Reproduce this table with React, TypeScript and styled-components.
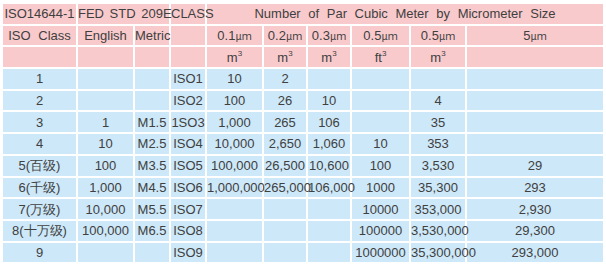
import React from 'react';
import styled, { createGlobalStyle } from 'styled-components';

const GlobalStyle = createGlobalStyle`
  body {
    margin: 0;
    background: #ffffff;
  }
`;

const Table = styled.table`
  margin: 2px 0 0 1px;
  width: 604px;
  table-layout: fixed;
  border-collapse: separate;
  border-spacing: 2px;
  font-family: 'Liberation Sans', Arial, sans-serif;
  font-size: 13px;
  color: #404040;
  word-spacing: 4px;
`;

const Cell = styled.td<{ $head?: boolean; $tight?: boolean }>`
  height: 19.7px;
  padding: 0;
  text-align: center;
  vertical-align: middle;
  white-space: nowrap;
  overflow: visible;
  line-height: 15px;
  background: ${(p) => (p.$head ? '#f9cacc' : '#cde8f9')};
  word-spacing: ${(p) => (p.$tight ? '2px' : 'inherit')};
`;

const Micro = styled.span`
  font-family: 'Noto Sans CJK SC', sans-serif;
  font-size: 10px;
  word-spacing: 0;
`;

const Sup = styled.sup`
  font-size: 8px;
  vertical-align: 6px;
  line-height: 0;
`;

const widths = [73, 55, 34, 34, 55, 42, 42, 57, 54, 136];

const rows: string[][] = [
  ['1', '', '', 'ISO1', '10', '2', '', '', '', ''],
  ['2', '', '', 'ISO2', '100', '26', '10', '', '4', ''],
  ['3', '1', 'M1.5', '1SO3', '1,000', '265', '106', '', '35', ''],
  ['4', '10', 'M2.5', 'ISO4', '10,000', '2,650', '1,060', '10', '353', ''],
  ['5(百级)', '100', 'M3.5', 'ISO5', '100,000', '26,500', '10,600', '100', '3,530', '29'],
  ['6(千级)', '1,000', 'M4.5', 'ISO6', '1,000,000', '265,000', '106,000', '1000', '35,300', '293'],
  ['7(万级)', '10,000', 'M5.5', 'ISO7', '', '', '', '10000', '353,000', '2,930'],
  ['8(十万级)', '100,000', 'M6.5', 'ISO8', '', '', '', '100000', '3,530,000', '29,300'],
  ['9', '', '', 'ISO9', '', '', '', '1000000', '35,300,000', '293,000'],
];

const Size = ({ v }: { v: string }) => (
  <Cell $head>
    {v}
    <Micro>μｍ</Micro>
  </Cell>
);

const Unit = ({ u }: { u: string }) => (
  <Cell $head>
    {u}
    <Sup>3</Sup>
  </Cell>
);

export default function App() {
  return (
    <>
      <GlobalStyle />
      <Table>
        <colgroup>
          {widths.map((w, i) => (
            <col key={i} style={{ width: w }} />
          ))}
        </colgroup>
        <thead>
          <tr>
            <Cell $head>ISO14644-1</Cell>
            <Cell $head $tight colSpan={2}>
              FED STD 209E
            </Cell>
            <Cell $head>CLASS</Cell>
            <Cell $head colSpan={6}>Number of Par Cubic Meter by Micrometer Size</Cell>
          </tr>
          <tr>
            <Cell $head>ISO Class</Cell>
            <Cell $head>English</Cell>
            <Cell $head>Metric</Cell>
            <Cell $head />
            <Size v="0.1" />
            <Size v="0.2" />
            <Size v="0.3" />
            <Size v="0.5" />
            <Size v="0.5" />
            <Size v="5" />
          </tr>
          <tr>
            <Cell $head />
            <Cell $head />
            <Cell $head />
            <Cell $head />
            <Unit u="m" />
            <Unit u="m" />
            <Unit u="m" />
            <Unit u="ft" />
            <Unit u="m" />
            <Cell $head />
          </tr>
        </thead>
        <tbody>
          {rows.map((r, i) => (
            <tr key={i}>
              {r.map((c, j) => (
                <Cell key={j}>{c}</Cell>
              ))}
            </tr>
          ))}
        </tbody>
      </Table>
    </>
  );
}
